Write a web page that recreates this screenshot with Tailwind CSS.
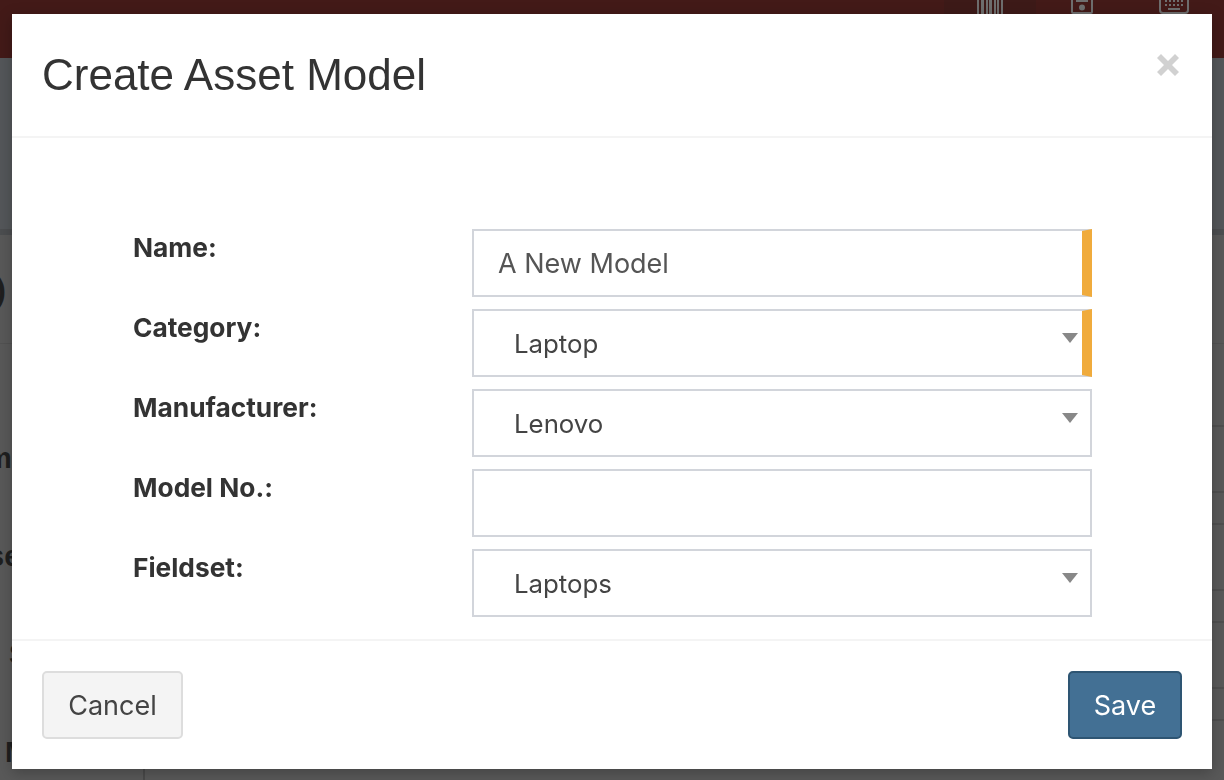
<!DOCTYPE html>
<html lang="en">
<head>
    <meta charset="UTF-8">
    <title>Create Asset Model</title>
    <script src="https://cdn.jsdelivr.net/npm/@tailwindcss/browser@4"></script>
</head>
<body class="h-[780px] overflow-hidden bg-[#595959] font-['Inter',sans-serif]">
    <!-- Page behind the dialog -->
    <div class="h-[58px] bg-[#431a18] flex justify-end pr-1 text-[#6e6e6e]">
        <div class="w-[92px] h-full bg-[#3d1a18] flex justify-center">
            <svg class="w-[26px] h-[14px]" viewBox="0 0 26 14" fill="currentColor"><path d="M0 0h2v14H0zM4 0h3v14H4zM9 0h2v14H9zM12 0h3v14h-3zM17 0h2v14h-2zM20 0h2v14h-2zM24 0h2v14h-2z"/></svg>
        </div>
        <div class="w-[92px] flex justify-center">
            <svg class="w-[22px] h-[14px]" viewBox="0 0 22 14" fill="none" stroke="currentColor" stroke-width="2"><path d="M1-2v14a1 1 0 0 0 1 1h18a1 1 0 0 0 1-1V-2"/><rect x="5" y="-1" width="12" height="3" fill="currentColor" stroke="none"/><circle cx="11" cy="7.5" r="3" fill="currentColor" stroke="none"/></svg>
        </div>
        <div class="w-[92px] flex justify-center">
            <svg class="w-[30px] h-[14px]" viewBox="0 0 30 14" fill="none" stroke="currentColor" stroke-width="2"><path d="M1-2v12a3 3 0 0 0 3 3h22a3 3 0 0 0 3-3V-2"/><path stroke-width="2" stroke-dasharray="2 2" d="M6 1h18M6 5h18"/><path d="M9 9h12"/></svg>
        </div>
    </div>
    <div class="h-[171px] bg-[#54575a]"></div>
    <div class="h-[6px] bg-[#4c4e50]"></div>
    <div class="h-[109px] border-b border-[#525252] flex items-center">
        <div class="w-[6px] flex justify-end whitespace-nowrap font-['Liberation_Sans',sans-serif] font-bold text-[34px] text-[#1f1f1f]">(0)</div>
    </div>
    <div class="flex h-[436px] overflow-hidden">
        <div class="w-[145px] h-[436px] overflow-hidden border-r-2 border-[#4a4a4a] pt-[98px] font-['Liberation_Sans',sans-serif] font-bold text-[29px] leading-[32px] text-[#1f1f1f] whitespace-nowrap">
            <div class="h-[98px] -ml-[14px]">m</div>
            <div class="h-[98px] -ml-[12px]">se</div>
            <div class="h-[98px] ml-[9px]">S</div>
            <div class="h-[32px] ml-[5px]">M</div>
        </div>
        <div class="flex-1">
            <div class="h-[83px] border-b-2 border-[#4f4f4f]"></div>
            <div class="h-[66px] border-b-2 border-[#4f4f4f]"></div>
            <div class="h-[32px] border-b-2 border-[#4f4f4f]"></div>
            <div class="h-[66px] border-b-2 border-[#4f4f4f]"></div>
            <div class="h-[32px] border-b-2 border-[#4f4f4f]"></div>
            <div class="h-[66px] border-b-2 border-[#4f4f4f]"></div>
            <div class="h-[32px] border-b-2 border-[#4f4f4f]"></div>
        </div>
    </div>
    <!-- Modal -->
    <div class="fixed inset-0 px-3 pt-[14px]">
        <div class="bg-white h-[755px] flex flex-col shadow-[0_4px_14px_rgba(0,0,0,0.25)]">
            <div class="h-[124px] border-b-2 border-[#f4f4f4] px-[30px] flex justify-between items-start">
                <h1 class="font-['Liberation_Sans',sans-serif] text-[44px] leading-[122px] text-[#333]">Create Asset Model</h1>
                <svg class="w-[24px] h-[24px] mt-[39px] mr-[2px]" viewBox="0 0 24 24" fill="#d1d1d1"><path d="M5 1l7 7 7-7 4 4-7 7 7 7-4 4-7-7-7 7-4-4 7-7-7-7z"/></svg>
            </div>
            <div class="flex-1 pl-[121px] pt-[91px]">
                <div class="flex flex-col gap-3">
                    <div class="flex">
                        <label class="w-[339px] text-[26.3px] font-bold text-[#333] leading-[38px]">Name:</label>
                        <div class="w-[620px] h-[68px] border-2 border-r-[10px] border-[#d2d5db] border-r-[#f0ab3c] pl-6 text-[27px] text-[#555] leading-[66px]">A New Model</div>
                    </div>
                    <div class="flex">
                        <label class="w-[339px] text-[26.3px] font-bold text-[#333] leading-[38px]">Category:</label>
                        <div class="relative w-[620px] h-[68px] border-2 border-r-[10px] border-[#d2d5db] border-r-[#f0ab3c] pl-10 text-[25.8px] text-[#444] leading-[66px]">Laptop
                            <span class="absolute right-[4px] top-[22px] border-x-[8px] border-t-[10px] border-x-transparent border-t-[#888]"></span>
                        </div>
                    </div>
                    <div class="flex">
                        <label class="w-[339px] text-[26.3px] font-bold text-[#333] leading-[38px]">Manufacturer:</label>
                        <div class="relative w-[620px] h-[68px] border-2 border-[#d2d5db] pl-10 text-[25.8px] text-[#444] leading-[66px]">Lenovo
                            <span class="absolute right-[12px] top-[22px] border-x-[8px] border-t-[10px] border-x-transparent border-t-[#888]"></span>
                        </div>
                    </div>
                    <div class="flex">
                        <label class="w-[339px] text-[26.3px] font-bold text-[#333] leading-[38px]">Model No.:</label>
                        <div class="w-[620px] h-[68px] border-2 border-[#d2d5db]"></div>
                    </div>
                    <div class="flex">
                        <label class="w-[339px] text-[26.3px] font-bold text-[#333] leading-[38px]">Fieldset:</label>
                        <div class="relative w-[620px] h-[68px] border-2 border-[#d2d5db] pl-10 text-[25.8px] text-[#444] leading-[66px]">Laptops
                            <span class="absolute right-[12px] top-[22px] border-x-[8px] border-t-[10px] border-x-transparent border-t-[#888]"></span>
                        </div>
                    </div>
                </div>
            </div>
            <div class="h-[130px] border-t-2 border-[#f4f4f4] px-[30px] pt-[30px] flex justify-between items-start">
                <button class="w-[141px] h-[68px] pt-0.5 rounded-[5px] border-2 border-[#ddd] bg-[#f4f4f4] text-[27px] text-[#444]">Cancel</button>
                <button class="w-[114px] h-[68px] pt-0.5 rounded-[5px] border-2 border-[#2e5573] bg-[#437094] text-[27px] text-white">Save</button>
            </div>
        </div>
    </div>
</body>
</html>
